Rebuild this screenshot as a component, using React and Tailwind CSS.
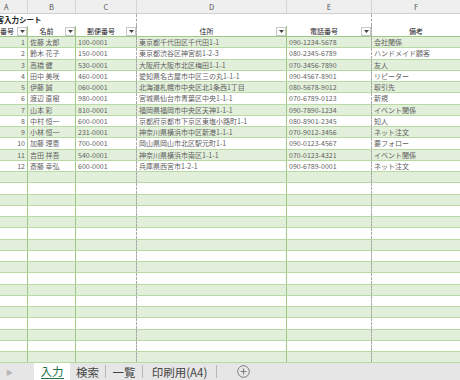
import React from "react";

const rows = [
  ["1", "佐藤 太郎", "100-0001", "東京都千代田区千代田1-1", "090-1234-5678", "会社関係"],
  ["2", "鈴木 花子", "150-0001", "東京都渋谷区神宮前1-2-3", "080-2345-6789", "ハンドメイド顧客"],
  ["3", "高橋 健", "530-0001", "大阪府大阪市北区梅田1-1-1", "070-3456-7890", "友人"],
  ["4", "田中 美咲", "460-0001", "愛知県名古屋市中区三の丸1-1-1", "090-4567-8901", "リピーター"],
  ["5", "伊藤 誠", "060-0001", "北海道札幌市中央区北1条西1丁目", "080-5678-9012", "取引先"],
  ["6", "渡辺 直樹", "980-0001", "宮城県仙台市青葉区中央1-1-1", "070-6789-0123", "新規"],
  ["7", "山本 彩", "810-0001", "福岡県福岡市中央区天神1-1-1", "090-7890-1234", "イベント関係"],
  ["8", "中村 恒一", "600-0001", "京都府京都市下京区東塩小路町1-1", "080-8901-2345", "知人"],
  ["9", "小林 恒一", "231-0001", "神奈川県横浜市中区新港1-1-1", "070-9012-3456", "ネット注文"],
  ["10", "加藤 理恵", "700-0001", "岡山県岡山市北区駅元町1-1", "090-0123-4567", "要フォロー"],
  ["11", "吉田 祥吾", "540-0001", "神奈川県横浜市南区1-1-1", "070-0123-4321", "イベント関係"],
  ["12", "斎藤 幸弘", "600-0001", "兵庫県西宮市1-2-1", "090-6789-0001", "ネット注文"],
];

const TOTAL = 29;

function Drop() {
  return (
    <div className="w-[10px] h-[9px] border border-[#c8c8c8] bg-white flex items-center justify-center shrink-0">
      <svg width="5" height="3" viewBox="0 0 5 3">
        <path d="M0 0 L5 0 L2.5 3 Z" fill="#444" />
      </svg>
    </div>
  );
}

const sol = "border-r border-[#9fc785]";
const dash = "border-r border-dashed border-[#a8a8a8]";
const grid = "grid grid-cols-[28px_48px_61px_150px_85px_88px]";

export default function App() {
  const body = [];
  for (let i = 0; i < TOTAL; i++) {
    const r = rows[i] || ["", "", "", "", "", ""];
    const green = i % 2 === 0;
    body.push(
      <div
        key={i}
        className={`${grid} h-[11.25px] border-b border-[#b9d9a4] text-[7px] leading-[10px] text-[#5f5f5f] ${green ? "bg-[#e2efda]" : "bg-white"}`}
      >
        <div className={`${sol} text-right pr-[2px] overflow-hidden whitespace-nowrap`}>{r[0]}</div>
        <div className={`${sol} pl-[2px] overflow-hidden whitespace-nowrap`}>{r[1]}</div>
        <div className={`${dash} pl-[2px] overflow-hidden whitespace-nowrap`}>{r[2]}</div>
        <div className={`${sol} pl-[2px] overflow-hidden whitespace-nowrap`}>{r[3]}</div>
        <div className={`${dash} pl-[2px] overflow-hidden whitespace-nowrap`}>{r[4]}</div>
        <div className="pl-[2px] overflow-hidden whitespace-nowrap">{r[5]}</div>
      </div>
    );
  }

  return (
    <div className="w-[460px] h-[380px] overflow-hidden bg-white flex flex-col font-['Noto_Sans_CJK_JP','Noto_Sans',sans-serif]">
      {/* column letters */}
      <div className={`${grid} h-[14px] shrink-0 bg-[#efefef] border-b border-[#cfcfcf] text-[7.5px] leading-[13px] text-[#555]`}>
        <div className="border-r border-[#d6d6d6] pl-[4px]">A</div>
        <div className="border-r border-[#d6d6d6] text-center">B</div>
        <div className="border-r border-[#d6d6d6] text-center">C</div>
        <div className="border-r border-[#d6d6d6] text-center">D</div>
        <div className="border-r border-[#d6d6d6] text-center">E</div>
        <div className="text-center">F</div>
      </div>
      {/* title row */}
      <div className={`${grid} h-[12px] shrink-0 text-[7.5px] leading-[12px] text-[#222] font-bold`}>
        <div className="overflow-visible whitespace-nowrap relative">
          <span className="absolute left-[-11px] top-0">顧客入力シート</span>
        </div>
        <div />
        <div className={dash} />
        <div />
        <div className={dash} />
        <div />
      </div>
      {/* table header */}
      <div className={`${grid} h-[11px] shrink-0 border-b border-[#9fc785] text-[7px] leading-[10px] text-[#222] bg-white`}>
        <div className={`${sol} flex items-center overflow-hidden`}>
          <div className="flex-1 flex justify-end overflow-hidden whitespace-nowrap pr-[3px]">顧客番号</div>
          <Drop />
        </div>
        <div className={`${sol} flex items-center overflow-hidden`}>
          <div className="flex-1 text-center whitespace-nowrap">名前</div>
          <Drop />
        </div>
        <div className={`${dash} flex items-center overflow-hidden`}>
          <div className="flex-1 text-center whitespace-nowrap">郵便番号</div>
          <Drop />
        </div>
        <div className={`${sol} flex items-center overflow-hidden`}>
          <div className="flex-1 text-center whitespace-nowrap">住所</div>
          <Drop />
        </div>
        <div className={`${dash} flex items-center overflow-hidden`}>
          <div className="flex-1 text-center whitespace-nowrap">電話番号</div>
          <Drop />
        </div>
        <div className="flex items-center overflow-hidden">
          <div className="flex-1 text-center whitespace-nowrap">備考</div>
        </div>
      </div>
      {/* body */}
      <div className="flex-1 overflow-hidden">{body}</div>
      {/* tab bar */}
      <div className="h-[17px] shrink-0 bg-[#e6e6e6] flex items-stretch text-[11.5px] leading-[16px] text-[#444]">
        <div className="w-[34px] flex items-center pl-[6px] text-[#b5b5b5] text-[7px]">▶</div>
        <div className="w-[36px] bg-white flex items-center justify-center text-[#217346]">
          <span className="border-b border-[#217346] leading-[14px]">入力</span>
        </div>
        <div className="w-[36px] flex items-center justify-center border-r border-[#b8b8b8] my-[2px]">検索</div>
        <div className="w-[37px] flex items-center justify-center border-r border-[#b8b8b8] my-[2px]">一覧</div>
        <div className="w-[74px] flex items-center justify-center border-r border-[#b8b8b8] my-[2px]">印刷用(A4)</div>
        <div className="w-[52px] flex items-center justify-center">
          <svg width="13" height="13" viewBox="0 0 13 13">
            <circle cx="6.5" cy="6.5" r="5.8" fill="none" stroke="#707070" strokeWidth="0.9" />
            <path d="M6.5 3.5 V9.5 M3.5 6.5 H9.5" stroke="#707070" strokeWidth="0.9" />
          </svg>
        </div>
      </div>
    </div>
  );
}
